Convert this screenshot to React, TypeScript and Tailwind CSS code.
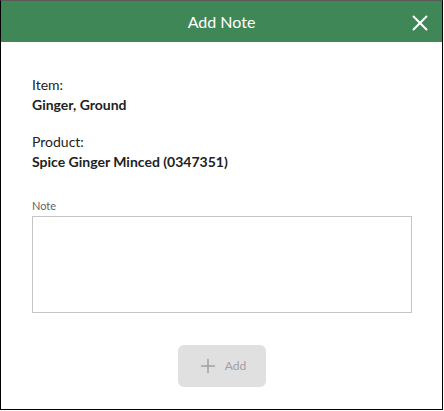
import { Plus, X } from "lucide-react";

export default function App() {
  return (
    <div className="h-[411px] w-[444px] bg-white font-['Lato',sans-serif]">
      <div className="flex h-[410px] w-[443px] flex-col border border-black border-t-[#5a5a5a]">
        <header className="relative flex h-[41px] items-center justify-center bg-[#3f8756] text-white">
          <h1 className="text-[16px] leading-none">Add Note</h1>
          <button className="absolute right-[9px] top-[9px] flex h-[26px] w-[26px] items-center justify-center text-white">
            <X size={26} strokeWidth={1.8} />
          </button>
        </header>

        <div className="flex flex-1 flex-col px-[31px] pt-[33px] text-[14px] leading-[20px] text-[#222]">
          <div>
            <p>Item:</p>
            <p className="font-bold">Ginger, Ground</p>
          </div>
          <div className="mt-[17px]">
            <p>Product:</p>
            <p className="font-bold">Spice Ginger Minced (0347351)</p>
          </div>

          <label className="mb-[3px] mt-[27px] block text-[11px] leading-[14px] text-[#5f5f5f]">
            Note
          </label>
          <textarea className="h-[97px] w-[380px] resize-none border border-[#c4c4c4] outline-none" />

          <div className="mt-[32px] flex justify-center">
            <button
              disabled
              className="flex h-[42px] w-[88px] items-center justify-center gap-[6px] rounded-[6px] bg-[#e0e0e0] text-[12px] text-[#a0a0a0]"
            >
              <Plus size={22} strokeWidth={1.6} />
              <span>Add</span>
            </button>
          </div>
        </div>
      </div>
    </div>
  );
}
